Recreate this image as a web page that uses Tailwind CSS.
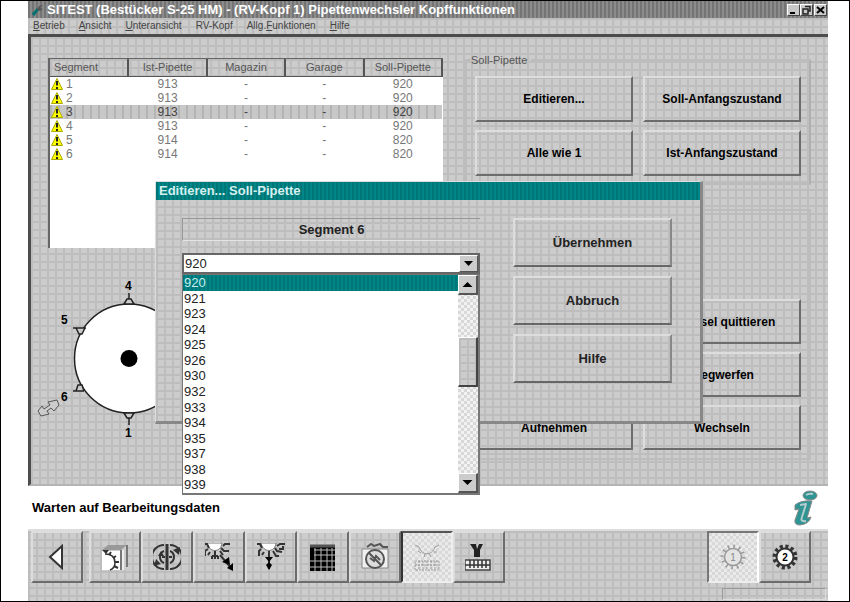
<!DOCTYPE html>
<html lang="de">
<head>
  <meta charset="UTF-8">
  <meta name="viewport" content="width=device-width, initial-scale=1.0">
  <title>SITEST Pipettenwechsler</title>
  <script src="https://cdn.jsdelivr.net/npm/@tailwindcss/browser@4"></script>
</head>
<body class="bg-white text-black font-['Liberation_Sans',sans-serif]">
  <div class="min-h-screen border border-black pl-[27px] pr-[21px] flex flex-col overflow-hidden">

    <!-- title bar -->
    <header class="h-[17px] flex items-center justify-between pl-1 pr-px text-white bg-[repeating-linear-gradient(90deg,#747474_0_2px,#8c8c8c_2px_4px)]">
      <div class="flex items-center gap-[3px] min-w-0">
        <svg class="w-3 h-3 shrink-0" viewBox="0 0 12 12"><path d="M1 11L6 5" stroke="#007070" stroke-width="3"/><path d="M5 6L7 2L11 1L8 4L11 5L8 7Z" fill="#555"/></svg>
        <h1 class="text-[13px] leading-4 font-bold whitespace-nowrap">SITEST (Bestücker S-25 HM) - (RV-Kopf 1) Pipettenwechsler Kopffunktionen</h1>
      </div>
      <div class="flex shrink-0">
        <button aria-label="Minimieren" class="w-[13px] h-3 bg-[#c8c8c8] border border-t-white border-l-white border-b-[#444] border-r-[#444]"><svg class="w-full h-full" viewBox="0 0 11 10"><path d="M2 8H7" stroke="#000" stroke-width="2"/></svg></button>
        <button aria-label="Wiederherstellen" class="w-[13px] h-3 bg-[#c8c8c8] border border-t-white border-l-white border-b-[#444] border-r-[#444]"><svg class="w-full h-full" viewBox="0 0 11 10"><path d="M4 1.500H9V6H7M2 4H7V9H2Z" fill="none" stroke="#222" stroke-width="1.500"/></svg></button>
        <button aria-label="Schließen" class="ml-px w-[13px] h-3 bg-[#c8c8c8] border border-t-white border-l-white border-b-[#444] border-r-[#444]"><svg class="w-full h-full" viewBox="0 0 11 10"><path d="M2 2L9 8M9 2L2 8" stroke="#000" stroke-width="2"/></svg></button>
      </div>
    </header>

    <!-- menu bar -->
    <nav class="h-4 pl-[5px] flex items-center gap-[14px] text-[10px] leading-4 text-[#444] bg-[#cccccc] bg-[linear-gradient(#bdbdbd_2px,transparent_2px),linear-gradient(90deg,#bdbdbd_2px,transparent_2px)] bg-size-[8px_8px]">
      <button><u>B</u>etrieb</button>
      <button><u>A</u>nsicht</button>
      <button><u>U</u>nteransicht</button>
      <button>RV-Kopf</button>
      <button>Allg.<u>F</u>unktionen</button>
      <button><u>H</u>ilfe</button>
    </nav>

    <!-- work area -->
    <main class="relative h-[452px] border-t-3 border-l-3 border-[#4c4c4c] border-b-2 border-b-[#b4b4b4] pl-[17px] pr-[17px] flex gap-[22px] bg-[#cccccc] bg-[linear-gradient(#bdbdbd_2px,transparent_2px),linear-gradient(90deg,#bdbdbd_2px,transparent_2px)] bg-size-[8px_8px]">
      <section class="flex-1 pt-[21px]">
        <div class="h-[190px] bg-white border-l-2 border-t border-[#666]">
          <table class="w-full table-fixed border-collapse text-xs leading-[14px] text-[#777] text-center">
            <thead>
              <tr class="h-[17px] text-[11px] text-[#555] bg-[#cccccc] bg-[linear-gradient(#bdbdbd_2px,transparent_2px),linear-gradient(90deg,#bdbdbd_2px,transparent_2px)] bg-size-[8px_8px]">
                <th class="font-normal text-left pl-1 border-r-2 border-b border-[#555]">Segment</th>
                <th class="font-normal border-r-2 border-b border-[#555]">Ist-Pipette</th>
                <th class="font-normal border-r-2 border-b border-[#555]">Magazin</th>
                <th class="font-normal border-r-2 border-b border-[#555]">Garage</th>
                <th class="font-normal border-r-2 border-b border-[#555]">Soll-Pipette</th>
              </tr>
            </thead>
            <tbody id="segments"></tbody>
          </table>
        </div>

        <!-- revolver head with six segments -->
        <svg class="block w-[170px] h-[180px] -ml-3 mt-6" viewBox="36 272 170 180" font-size="12" font-weight="bold">
          <circle cx="129" cy="358.500" r="54.500" fill="#fff" stroke="#222" stroke-width="1.500"/>
          <circle cx="129" cy="358.500" r="8.500"/>
          <g fill="#ccc" stroke="#222" stroke-width="1.500">
            <path d="M124 304L127 299H131L134 304ZM129 299V293"/>
            <path d="M124 413L127 418H131L134 413ZM129 418V425"/>
            <path d="M73 328H86M76 328L79 334H82L85 328"/>
            <path d="M73 391H84M76 391L78 385H82L84 391"/>
          </g>
          <path d="M38 411L42 406L44 409L50 405L48 402L57 400L59 405L54 411L51 408L47 411L49 414L41 416Z" fill="#ccc" stroke="#555"/>
          <text x="125" y="290">4</text>
          <text x="61" y="324">5</text>
          <text x="61" y="401">6</text>
          <text x="125" y="437">1</text>
        </svg>
      </section>

      <section class="w-[346px] shrink-0 pt-[16px]">
        <fieldset class="h-[132px] border-2 border-[#bcbcbc] border-r-[#b0b0b0] px-2">
          <legend class="-ml-1 text-[11px] leading-[14px] text-[#555] pr-1">Soll-Pipette</legend>
          <div class="pt-[9px] grid grid-cols-2 gap-x-[10px] gap-y-2 text-xs font-bold">
            <button class="h-[46px] border-2 border-t-[#ddd] border-l-[#ddd] border-b-[#6c6c6c] border-r-[#6c6c6c]">Editieren...</button>
            <button class="h-[46px] border-2 border-t-[#ddd] border-l-[#ddd] border-b-[#6c6c6c] border-r-[#6c6c6c]">Soll-Anfangszustand</button>
            <button class="h-[46px] border-2 border-t-[#ddd] border-l-[#ddd] border-b-[#6c6c6c] border-r-[#6c6c6c]">Alle wie 1</button>
            <button class="h-[46px] border-2 border-t-[#ddd] border-l-[#ddd] border-b-[#6c6c6c] border-r-[#6c6c6c]">Ist-Anfangszustand</button>
          </div>
        </fieldset>
        <div class="mt-6 h-[251px] border-2 border-[#bcbcbc] px-2 pt-[88px]">
          <div class="grid grid-cols-2 gap-x-[10px] gap-y-2 text-xs font-bold">
            <button class="col-start-2 h-[45px] border-2 border-t-[#ddd] border-l-[#ddd] border-b-[#6c6c6c] border-r-[#6c6c6c]">Wechsel quittieren</button>
            <button class="col-start-2 h-[45px] border-2 border-t-[#ddd] border-l-[#ddd] border-b-[#6c6c6c] border-r-[#6c6c6c]">Wegwerfen</button>
            <button class="h-[45px] border-2 border-t-[#ddd] border-l-[#ddd] border-b-[#6c6c6c] border-r-[#6c6c6c]">Aufnehmen</button>
            <button class="h-[45px] border-2 border-t-[#ddd] border-l-[#ddd] border-b-[#6c6c6c] border-r-[#6c6c6c]">Wechseln</button>
          </div>
        </div>
      </section>

      <!-- dialog -->
      <div role="dialog" aria-labelledby="dlgTitle" class="absolute left-[124px] top-[144px] w-[548px] h-[243px] border-t border-l border-[#ddd] border-r-3 border-b-3 border-r-[#888] border-b-[#888] bg-[#cccccc] bg-[linear-gradient(#bdbdbd_2px,transparent_2px),linear-gradient(90deg,#bdbdbd_2px,transparent_2px)] bg-size-[8px_8px]">
        <h2 id="dlgTitle" class="h-[18px] pl-[3px] text-[13px] leading-[18px] font-bold text-[#d5f0f0] bg-[repeating-linear-gradient(90deg,#007676_0_2px,#008686_2px_4px)]">Editieren... Soll-Pipette</h2>
        <div class="pl-[26px] pr-7 pt-[18px] flex justify-between">
          <div class="w-[298px] relative">
            <div class="h-[23px] border-t border-l border-t-[#999] border-l-[#999] border-b border-b-[#e4e4e4] text-[13px] leading-[21px] text-center font-bold text-[#222]"><label for="pipette">Segment 6</label></div>
            <div class="relative mt-3 h-[21px] border-2 border-[#666] bg-white">
              <select id="pipette" class="appearance-none block w-full h-full pl-px text-[13px] leading-[17px] text-[#222]"><option>920</option></select>
              <div class="pointer-events-none absolute right-0 top-0 w-[19px] h-[17px] bg-[#ccc] border border-r-[#555] border-b-[#555] border-t-white border-l-white"><svg class="w-full h-full" viewBox="0 0 17 15"><path d="M4 5H13L8.500 10Z"/></svg></div>
            </div>
            <div class="absolute top-[56px] left-0 w-full h-[221px] border border-r-2 border-b-2 border-[#777] bg-white flex">
              <ul id="options" role="listbox" class="flex-1 grid auto-rows-fr text-[13px] leading-[15px] text-[#222]"></ul>
              <div class="w-[20px] flex flex-col bg-[#e2e2e2] bg-[repeating-conic-gradient(#f2f2f2_0_25%,#d8d8d8_0_50%)] bg-size-[6px_6px]">
                <button aria-label="Nach oben" class="h-5 bg-[#ccc] border border-t-white border-l-white border-r-2 border-b-2 border-r-[#555] border-b-[#555]"><svg class="w-full h-full" viewBox="0 0 16 17"><path d="M3 11H13L8 6Z"/></svg></button>
                <div class="mt-[42px] h-[50px] border border-t-white border-l-white border-r-2 border-b-2 border-r-[#444] border-b-[#444] bg-[#cccccc] bg-[linear-gradient(#bdbdbd_2px,transparent_2px),linear-gradient(90deg,#bdbdbd_2px,transparent_2px)] bg-size-[8px_8px]"></div>
                <button aria-label="Nach unten" class="mt-auto h-5 bg-[#ccc] border border-t-white border-l-white border-r-2 border-b-2 border-r-[#555] border-b-[#555]"><svg class="w-full h-full" viewBox="0 0 16 17"><path d="M3 6H13L8 11Z"/></svg></button>
              </div>
            </div>
          </div>
          <div class="w-[159px] flex flex-col gap-[9px] text-[13px] font-bold text-[#222]">
            <button class="h-[49px] border-2 border-t-[#ddd] border-l-[#ddd] border-b-[#666] border-r-[#888]">Übernehmen</button>
            <button class="h-[49px] border-2 border-t-[#ddd] border-l-[#ddd] border-b-[#666] border-r-[#888]">Abbruch</button>
            <button class="h-[49px] border-2 border-t-[#ddd] border-l-[#ddd] border-b-[#666] border-r-[#888]">Hilfe</button>
          </div>
        </div>
      </div>
    </main>

    <!-- message line -->
    <div class="h-[43px] pl-1 pr-[10px] flex items-center justify-between bg-white">
      <p class="text-[13px] font-bold">Warten auf Bearbeitungsdaten</p>
      <svg class="w-[26px] h-9" viewBox="0 0 26 36" stroke-linejoin="round"><g fill="#2f9494" stroke="#888" stroke-width="1"><ellipse cx="18" cy="5.500" rx="7" ry="4.500"/><path d="M3 15Q9 10 20 11L15 28L19 27Q17 34 8 35Q2 35 3 30L7 19L3 20Z"/></g><path d="M14 5Q17 3 21 4M8 15L14 14L10 27Q8 32 14 31" fill="none" stroke="#b4cccc" stroke-width="2"/></svg>
    </div>

    <!-- toolbar -->
    <footer class="flex-1 bg-[#cccccc] bg-[linear-gradient(#bdbdbd_2px,transparent_2px),linear-gradient(90deg,#bdbdbd_2px,transparent_2px)] bg-size-[8px_8px] border-t-2 border-[#ddd]">
      <div class="pl-[3px] pr-[17px] flex">
        <button aria-label="Zurück" class="w-[52px] h-[52px] mr-[6px] flex items-center justify-center border-2 border-t-[#ddd] border-l-[#ddd] border-b-[#6c6c6c] border-r-[#6c6c6c]"><svg class="w-7 h-7" viewBox="0 0 28 28"><path d="M7 14L19 3V25Z" fill="#fff" stroke="#333" stroke-width="2"/></svg></button>
        <button aria-label="Magazin" class="w-[52px] h-[52px] flex items-center justify-center border-2 border-t-[#ddd] border-l-[#ddd] border-b-[#6c6c6c] border-r-[#6c6c6c]"><svg class="w-7 h-7" viewBox="0 0 28 28"><path d="M1 7L7 2H26V27H1Z" fill="#ccc"/><path d="M1 8H19V27H1Z" fill="#fff"/><path d="M1 7L7 2H26L20 7Z" fill="#999"/><path d="M22 7V27" stroke="#eee" stroke-width="2"/><path d="M20 7V27M26 2V24" stroke="#777" stroke-width="2"/><path d="M1 7H8L5 11Z" fill="#333"/><path d="M4 11Q14 11 14 20Q14 25 9 27" fill="none" stroke="#333" stroke-width="1.500"/><path d="M8 12L10 9M12 15L15 13M14 19H18M13 23L17 25" stroke="#333" stroke-width="2"/></svg></button>
        <button aria-label="Drehen" class="w-[52px] h-[52px] flex items-center justify-center border-2 border-t-[#ddd] border-l-[#ddd] border-b-[#6c6c6c] border-r-[#6c6c6c]"><svg class="w-7 h-7" viewBox="0 0 28 28" fill="none" stroke="#333" stroke-width="2"><path d="M11 2A12 12 0 0 0 11 26M17 2A12 12 0 0 1 17 26M11 8A6.500 6.500 0 0 0 11 20M17 8A6.500 6.500 0 0 1 17 20M9 14H12M16 14H19"/><path d="M14 1V27" stroke-width="3"/><path d="M20 7L27 4L26 12ZM8 21L1 23L3 16ZM5 13L8 8L11 13Z" fill="#333" stroke="none"/></svg></button>
        <button aria-label="Schräg abholen" class="w-[52px] h-[52px] flex items-center justify-center border-2 border-t-[#ddd] border-l-[#ddd] border-b-[#6c6c6c] border-r-[#6c6c6c]"><svg class="w-7 h-7" viewBox="0 0 28 28"><path d="M2 0H17C16 10 4 10 2 0Z" fill="#fff" stroke="#777"/><g stroke="#333" stroke-width="2" fill="none"><path d="M0 1H2L4 5M3 6L0 8V13M5 9L3 12M10 8V16M7 13H13M7 13V16M13 13V16M16 5L19 8H24M18 3L20 1H25M15 8L18 12"/><path d="M15 12L27 26"/></g><path d="M17 19L24 14L25 22Z"/><path d="M22 25L28 20L28 28Z"/></svg></button>
        <button aria-label="Gerade abholen" class="w-[52px] h-[52px] flex items-center justify-center border-2 border-t-[#ddd] border-l-[#ddd] border-b-[#6c6c6c] border-r-[#6c6c6c]"><svg class="w-7 h-7" viewBox="0 0 28 28"><path d="M4 0H19C18 10 6 10 4 0Z" fill="#fff" stroke="#777"/><g stroke="#333" stroke-width="2" fill="none"><path d="M0 1H3L5 5M4 6L2 8V13M7 9L5 12M12 8V26M18 5L20 8L25 9M20 3L23 1H28M16 8L19 13H22M22 6H26V3"/></g><path d="M8 14H16L12 19ZM9 22L12 19L15 22L12 27Z"/></svg></button>
        <button aria-label="Raster" class="w-[52px] h-[52px] flex items-center justify-center border-2 border-t-[#ddd] border-l-[#ddd] border-b-[#6c6c6c] border-r-[#6c6c6c]"><svg class="w-7 h-7" viewBox="0 0 28 28"><path d="M1 2H26V28H1Z"/><path d="M1 3H26" stroke="#555" stroke-width="3"/><path d="M5 7H26M5 12H26M1 18H26M1 24H26M6 5V28M12 5V28M18 5V28M23 5V28" stroke="#bbb"/></svg></button>
        <button aria-label="Kamera" class="w-[52px] h-[52px] flex items-center justify-center border-2 border-t-[#ddd] border-l-[#ddd] border-b-[#6c6c6c] border-r-[#6c6c6c]"><svg class="w-7 h-7" viewBox="0 0 28 28"><path d="M1 6H27V25H1Z" fill="#f0f0f0" stroke="#888"/><path d="M6 4L10 1L13 3L19 1L22 4H27" fill="none" stroke="#555" stroke-width="2"/><circle cx="14" cy="16" r="9" fill="#ddd" stroke="#555" stroke-width="2"/><path d="M8 10L20 22M9 15L13 18L15 13L19 17" fill="none" stroke="#555" stroke-width="2"/></svg></button>
        <button aria-label="Pipettenwechsler" aria-pressed="true" class="w-[52px] h-[52px] flex items-center justify-center border-2 border-t-[#555] border-l-[#333] border-b-[#eee] border-r-[#eee] bg-[#e0e0e0] bg-[repeating-conic-gradient(#eaeaea_0_25%,#d8d8d8_0_50%)] bg-size-[6px_6px]"><svg class="w-7 h-7" viewBox="0 0 28 28" fill="none" stroke="#999"><path d="M2 2L6 4M6 4C9 13 19 13 22 4M22 4L26 2M5 8L8 10M12 11L11 14M16 11L18 14M21 9L24 9"/><path d="M2 18H26V27H2ZM2 22H26M6 18V27M10 18V27M14 18V27M18 18V27M22 18V27" stroke-dasharray="2 1"/></svg></button>
        <button aria-label="Pipette ablegen" class="w-[52px] h-[52px] flex items-center justify-center border-2 border-t-[#ddd] border-l-[#ddd] border-b-[#6c6c6c] border-r-[#6c6c6c]"><svg class="w-7 h-7" viewBox="0 0 28 28"><path d="M5 1H18L15 7V14H9V7Z" fill="#222"/><path d="M11 1L12 6L14 1Z" fill="#ccc"/><path d="M0 17H25V27H0Z" fill="#eee" stroke="#444" stroke-width="1.500"/><path d="M0 22H25M5 17V25M9 17V25M13 17V25M17 17V25M21 17V25" stroke="#333" stroke-width="1.500"/></svg></button>
        <button aria-label="Kopf 1" aria-pressed="true" class="ml-auto w-[52px] h-[52px] flex items-center justify-center border-2 border-t-[#777] border-l-[#777] border-b-[#eee] border-r-white bg-[#e0e0e0] bg-[repeating-conic-gradient(#eaeaea_0_25%,#d8d8d8_0_50%)] bg-size-[6px_6px]"><svg class="w-7 h-7" viewBox="0 0 28 28"><circle cx="14" cy="14" r="10.500" fill="none" stroke="#999" stroke-width="4" stroke-dasharray="1.500 4"/><circle cx="14" cy="14" r="8.500" fill="#e4e4e4" stroke="#999" stroke-width="1.500"/><text x="14" y="18" font-size="10" text-anchor="middle" fill="#888">1</text></svg></button>
        <button aria-label="Kopf 2" class="w-[52px] h-[52px] flex items-center justify-center border-2 border-t-[#ddd] border-l-[#ddd] border-b-[#6c6c6c] border-r-[#6c6c6c]"><svg class="w-7 h-7" viewBox="0 0 28 28"><circle cx="14" cy="14" r="10.500" fill="none" stroke="#333" stroke-width="4" stroke-dasharray="3 2.500"/><circle cx="14" cy="14" r="8.500" fill="#fff" stroke="#333" stroke-width="2"/><text x="14" y="18" font-size="10" font-weight="bold" text-anchor="middle">2</text></svg></button>
      </div>
      <div class="mt-[5px] ml-auto mr-[2px] w-[104px] h-3 border border-[#999] border-b-[#ddd] border-r-[#ddd]"></div>
    </footer>
  </div>

  <script>
    const segments = [
      {id: 1, ist: 913, soll: 920},
      {id: 2, ist: 913, soll: 920},
      {id: 3, ist: 913, soll: 920},
      {id: 4, ist: 913, soll: 920},
      {id: 5, ist: 914, soll: 820},
      {id: 6, ist: 914, soll: 820}
    ];
    const pipettes = [920, 921, 923, 924, 925, 926, 930, 932, 933, 934, 935, 937, 938, 939];
    const activeRow = "h-[14px] text-[#444] bg-[#c4c4c4] bg-[repeating-linear-gradient(90deg,#b4b4b4_0_2px,#c8c8c8_2px_8px)]";

    document.getElementById("segments").innerHTML = segments.map(s => `
      <tr class="${s.id === 3 ? activeRow : "h-[14px]"}">
        <td class="pl-px"><div class="flex items-center gap-[3px]">
          <svg class="w-3 h-3" viewBox="0 0 12 12"><path d="M6 0.500L11.500 11.500H0.500Z" fill="#ff0" stroke="#aaaa00"/><path d="M6 3V7.500M6 9V11" stroke="#222" stroke-width="2"/></svg>${s.id}</div></td>
        <td>${s.ist}</td><td>-</td><td>-</td><td>${s.soll}</td>
      </tr>`).join("");

    document.getElementById("options").innerHTML = pipettes.map((p, i) => `
      <li role="option" class="pl-px ${i === 0 ? "text-[#c8eeee] bg-[repeating-linear-gradient(90deg,#007676_0_2px,#008686_2px_4px)]" : ""}">${p}</li>`).join("");
  </script>
</body>
</html>
